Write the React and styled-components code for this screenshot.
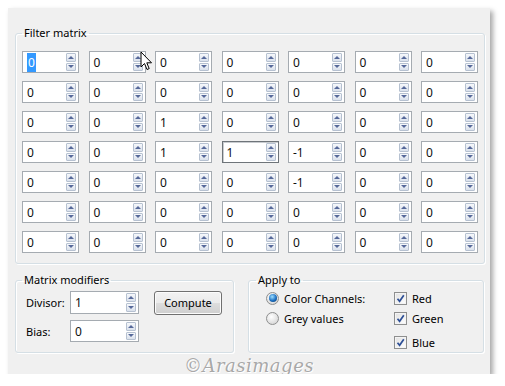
import React from 'react';
import styled, { createGlobalStyle, css } from 'styled-components';

const Global = createGlobalStyle`
  html, body { margin: 0; padding: 0; background: #fff; }
  body { font-family: "Noto Sans", "DejaVu Sans", sans-serif; font-size: 11px; color: #000; }
  * { box-sizing: border-box; }
`;

const Page = styled.div`
  padding: 8px 0 0 8px;
`;

const Dialog = styled.div`
  position: relative;
  width: 482px;
  height: 366px;
  background: #f0f0f0;
  box-shadow: 3px 3px 5px rgba(0, 0, 0, 0.35);
  padding: 17px 5px 0 7px;
  display: flex;
  flex-direction: column;
`;

const Group = styled.fieldset`
  margin: 0;
  min-width: 0;
  border: 1px solid #d5dfe5;
  border-radius: 3px;
  box-shadow: inset 1px 1px 0 #fff, 1px 1px 0 #fff;
  padding: ${(p) => p.$pad};
  ${(p) => p.$width && css`width: ${p.$width}px;`}
`;

const Legend = styled.legend`
  margin-left: ${(p) => p.$ml || 0}px;
  padding: 0 2px;
  line-height: 16px;
  font-size: 11px;
  color: #000;
`;

const Matrix = styled.div`
  display: grid;
  grid-template-columns: repeat(7, 57px);
  grid-auto-rows: 22px;
  column-gap: 9.5px;
  row-gap: 8px;
`;

const Field = styled.div`
  display: flex;
  align-items: stretch;
  background: #fff;
  border: 1px solid ${(p) => (p.$focus ? '#6e7479' : '#a5abb1')};
  box-shadow: ${(p) => (p.$focus ? 'inset 1px 1px 0 #c9ccd0' : 'none')};
  height: ${(p) => (p.$h ? `${p.$h}px` : 'auto')};
`;

const Value = styled.div`
  flex: 1;
  display: flex;
  align-items: center;
  padding-left: 4px;
  font-size: 12px;
  color: #111;
`;

const Selected = styled.span`
  background: #3399ff;
  color: #fff;
  padding: 2px 1px;
  line-height: 15px;
`;

const Spin = styled.div`
  width: 10px;
  margin: 1px 2px 1px 0;
  display: flex;
  flex-direction: column;
  gap: 1px;
`;

const SpinBtn = styled.div`
  flex: 1;
  border: 1px solid #b6c1d1;
  border-radius: 1px;
  background: linear-gradient(#f6f8fb, #dae1ec);
  display: flex;
  align-items: center;
  justify-content: center;
  &::after {
    content: '';
    border-left: 3px solid transparent;
    border-right: 3px solid transparent;
    ${(p) =>
      p.$down
        ? css`border-top: 3px solid #56699a;`
        : css`border-bottom: 3px solid #56699a;`}
  }
`;

const BottomRow = styled.div`
  display: flex;
  gap: 14px;
  margin-top: 8px;
`;

const ModGrid = styled.div`
  display: grid;
  grid-template-columns: 44px 69px auto;
  grid-template-rows: 23px 22px;
  row-gap: 6px;
  align-items: center;
`;

const Label = styled.div`
  font-size: 11px;
`;

const Button = styled.button`
  grid-column: 3;
  grid-row: 1;
  margin-left: 15px;
  width: 68px;
  height: 24px;
  border: 1px solid #707070;
  border-radius: 3px;
  background: linear-gradient(#f2f2f2 0%, #ebebeb 49%, #dddddd 51%, #cfcfcf 100%);
  box-shadow: inset 0 0 0 1px #fcfcfc;
  font-family: inherit;
  font-size: 11px;
  color: #000;
  padding: 0;
`;

const ApplyGrid = styled.div`
  display: grid;
  grid-template-columns: 128px auto;
`;

const Col = styled.div`
  display: flex;
  flex-direction: column;
`;

const OptionRow = styled.div`
  display: flex;
  align-items: center;
  gap: 5px;
  height: ${(p) => p.$h}px;
  margin-top: ${(p) => p.$mt || 0}px;
`;

const Radio = styled.span`
  width: 13px;
  height: 13px;
  border-radius: 50%;
  border: 1px solid #8e8f8f;
  background: radial-gradient(circle at 40% 35%, #ffffff, #d7d7d7 80%);
  display: flex;
  align-items: center;
  justify-content: center;
  flex: none;
  &::after {
    content: '';
    display: ${(p) => (p.$checked ? 'block' : 'none')};
    width: 8px;
    height: 8px;
    border-radius: 50%;
    background: radial-gradient(circle at 40% 35%, #9fe0ff, #1c6fc2 55%, #0b355f);
  }
`;

const Check = styled.span`
  width: 13px;
  height: 13px;
  border: 1px solid #8e8f8f;
  background: linear-gradient(135deg, #e0e0e0, #ffffff);
  box-shadow: inset 0 0 0 1px #f4f4f4;
  display: flex;
  align-items: center;
  justify-content: center;
  flex: none;
`;

const Watermark = styled.div`
  position: absolute;
  left: 50%;
  bottom: -2px;
  transform: translateX(-50%);
  font-family: "DejaVu Serif", serif;
  font-style: italic;
  font-size: 18px;
  letter-spacing: 0.5px;
  color: #a8a8a8;
  text-shadow: 0 0 1px #fff, 1px 1px 0 #fff;
  white-space: nowrap;
  pointer-events: none;
`;

const Cursor = styled.svg`
  position: absolute;
  left: 132px;
  top: 43px;
`;

const rows = [
  [0, 0, 0, 0, 0, 0, 0],
  [0, 0, 0, 0, 0, 0, 0],
  [0, 0, 1, 0, 0, 0, 0],
  [0, 0, 1, 1, -1, 0, 0],
  [0, 0, 0, 0, -1, 0, 0],
  [0, 0, 0, 0, 0, 0, 0],
  [0, 0, 0, 0, 0, 0, 0],
];

function SpinField({ value, focus, selected, h }) {
  return (
    <Field $focus={focus} $h={h}>
      <Value>{selected ? <Selected>{value}</Selected> : value}</Value>
      <Spin>
        <SpinBtn />
        <SpinBtn $down />
      </Spin>
    </Field>
  );
}

function CheckMark() {
  return (
    <svg width="9" height="9" viewBox="0 0 9 9">
      <path d="M1.5 4.8 L3.6 7.3 L7.8 1.2" fill="none" stroke="#2d4f96" strokeWidth="1.7" />
    </svg>
  );
}

export default function App() {
  return (
    <>
      <Global />
      <Page>
        <Dialog>
          <Group $pad="10px 5px 10px 6px">
            <Legend>Filter matrix</Legend>
            <Matrix>
              {rows.map((r, ri) =>
                r.map((v, ci) => (
                  <SpinField
                    key={`${ri}-${ci}`}
                    value={v}
                    focus={ri === 3 && ci === 3}
                    selected={ri === 0 && ci === 0}
                  />
                ))
              )}
            </Matrix>
          </Group>
          <BottomRow>
            <Group $width={219} $pad="3px 6px 10px 10px">
              <Legend $ml={-4}>Matrix modifiers</Legend>
              <ModGrid>
                <Label>Divisor:</Label>
                <SpinField value={1} h={23} />
                <Button>Compute</Button>
                <Label>Bias:</Label>
                <SpinField value={0} h={22} />
              </ModGrid>
            </Group>
            <Group $width={236} $pad="0 6px 1px 17px">
              <Legend $ml={-10}>Apply to</Legend>
              <ApplyGrid>
                <Col>
                  <OptionRow $h={20}>
                    <Radio $checked />
                    Color Channels:
                  </OptionRow>
                  <OptionRow $h={20}>
                    <Radio />
                    Grey values
                  </OptionRow>
                </Col>
                <Col>
                  <OptionRow $h={20}>
                    <Check><CheckMark /></Check>
                    Red
                  </OptionRow>
                  <OptionRow $h={21}>
                    <Check><CheckMark /></Check>
                    Green
                  </OptionRow>
                  <OptionRow $h={18} $mt={4}>
                    <Check><CheckMark /></Check>
                    Blue
                  </OptionRow>
                </Col>
              </ApplyGrid>
            </Group>
          </BottomRow>
          <Watermark>©Arasimages</Watermark>
          <Cursor width="13" height="20" viewBox="0 0 13 20">
            <path d="M1 1 L1 16 L4.5 12.5 L7 18.5 L9.2 17.6 L6.8 11.8 L11.5 11.8 Z" fill="#fff" stroke="#000" strokeWidth="1" strokeLinejoin="round" />
          </Cursor>
        </Dialog>
      </Page>
    </>
  );
}
